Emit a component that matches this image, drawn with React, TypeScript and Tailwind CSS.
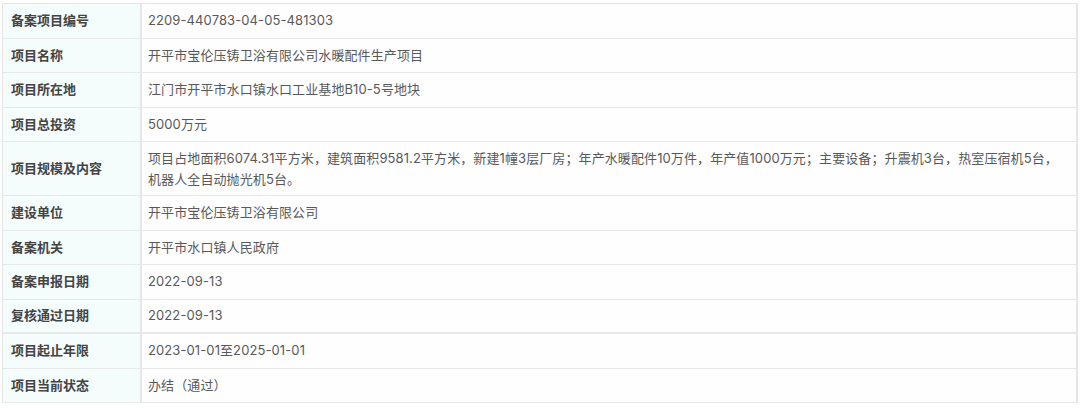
const rows: { label: string; value: string; tall?: boolean; thick?: boolean }[] = [
  { label: "备案项目编号", value: "2209-440783-04-05-481303" },
  { label: "项目名称", value: "开平市宝伦压铸卫浴有限公司水暖配件生产项目" },
  { label: "项目所在地", value: "江门市开平市水口镇水口工业基地B10-5号地块" },
  { label: "项目总投资", value: "5000万元" },
  {
    label: "项目规模及内容",
    value:
      "项目占地面积6074.31平方米，建筑面积9581.2平方米，新建1幢3层厂房；年产水暖配件10万件，年产值1000万元；主要设备；升震机3台，热室压宿机5台，机器人全自动抛光机5台。",
    tall: true,
  },
  { label: "建设单位", value: "开平市宝伦压铸卫浴有限公司" },
  { label: "备案机关", value: "开平市水口镇人民政府" },
  { label: "备案申报日期", value: "2022-09-13" },
  { label: "复核通过日期", value: "2022-09-13", thick: true },
  { label: "项目起止年限", value: "2023-01-01至2025-01-01" },
  { label: "项目当前状态", value: "办结（通过）" },
];

export default function App() {
  return (
    <div className="h-[409px] w-[1080px] bg-white pl-[2px] pt-[3px] font-['Inter','Noto_Sans_CJK_SC',sans-serif] text-[13px]">
      <div className="w-[1076px] border-l border-r-2 border-t border-[#e6e6e6]">
        {rows.map((r) => (
          <div
            key={r.label}
            className={`flex border-[#e8e8e8] ${r.thick ? "border-b-2" : "border-b"} ${
              r.tall ? "h-[54px]" : "h-[34.5px]"
            }`}
          >
            <div className="flex w-[139px] shrink-0 items-center border-r-2 border-[#e6e6e6] bg-[#f5fcfc] pl-[8px] font-bold text-[#444]">
              {r.label}
            </div>
            <div className="flex flex-1 items-center bg-[#fefefe] pl-[6px] pr-[6px] leading-[21px] tracking-[0.1px] text-[#595959]">
              {r.value}
            </div>
          </div>
        ))}
      </div>
    </div>
  );
}
